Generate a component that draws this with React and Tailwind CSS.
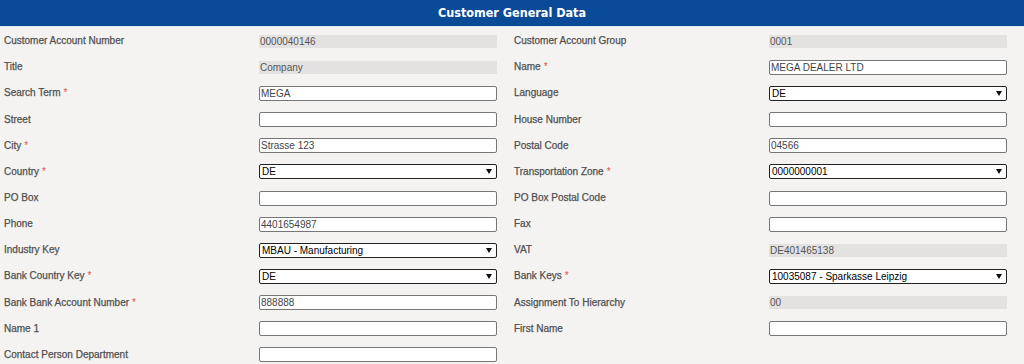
import React from "react";

const Arrow = () => (
  <svg width="6" height="5" viewBox="0 0 6 5" className="absolute right-[4px] top-[4px]">
    <path d="M0 0 H6 L3 5 Z" fill="#111" />
  </svg>
);

function Field({ f }) {
  if (!f) return <div />;
  const { label, req, type, value } = f;
  return (
    <div className="flex items-center pl-[4px]">
      <div className="w-[255px] shrink-0 text-[10px] text-[#505050] leading-none [-webkit-text-stroke:0.25px_#505050]">
        {label}
        {req && <span className="text-[#d9534f] ml-[3px] [-webkit-text-stroke:0px]">*</span>}
      </div>
      {type === "ro" && (
        <div className="w-[238px] h-[13px] bg-[#e3e2e1] text-[10px] text-[#555] leading-[13px] pl-[1px]">
          {value}
        </div>
      )}
      {type === "in" && (
        <div className="w-[238px] h-[15px] bg-white border border-[#767676] rounded-[2px] text-[10px] text-[#444] leading-[13px] pl-[1px]">
          {value}
        </div>
      )}
      {type === "sel" && (
        <div className="relative w-[238px] h-[15px] bg-white border border-[#222] rounded-[2px] text-[10px] text-black leading-[13px] pl-[2px]">
          {value}
          <Arrow />
        </div>
      )}
    </div>
  );
}

const rows = [
  [
    { label: "Customer Account Number", type: "ro", value: "0000040146" },
    { label: "Customer Account Group", type: "ro", value: "0001" },
  ],
  [
    { label: "Title", type: "ro", value: "Company" },
    { label: "Name", req: true, type: "in", value: "MEGA DEALER LTD" },
  ],
  [
    { label: "Search Term", req: true, type: "in", value: "MEGA" },
    { label: "Language", type: "sel", value: "DE" },
  ],
  [
    { label: "Street", type: "in", value: "" },
    { label: "House Number", type: "in", value: "" },
  ],
  [
    { label: "City", req: true, type: "in", value: "Strasse 123" },
    { label: "Postal Code", type: "in", value: "04566" },
  ],
  [
    { label: "Country", req: true, type: "sel", value: "DE" },
    { label: "Transportation Zone", req: true, type: "sel", value: "0000000001" },
  ],
  [
    { label: "PO Box", type: "in", value: "" },
    { label: "PO Box Postal Code", type: "in", value: "" },
  ],
  [
    { label: "Phone", type: "in", value: "4401654987" },
    { label: "Fax", type: "in", value: "" },
  ],
  [
    { label: "Industry Key", type: "sel", value: "MBAU - Manufacturing" },
    { label: "VAT", type: "ro", value: "DE401465138" },
  ],
  [
    { label: "Bank Country Key", req: true, type: "sel", value: "DE" },
    { label: "Bank Keys", req: true, type: "sel", value: "10035087 - Sparkasse Leipzig" },
  ],
  [
    { label: "Bank Bank Account Number", req: true, type: "in", value: "888888" },
    { label: "Assignment To Hierarchy", type: "ro", value: "00" },
  ],
  [
    { label: "Name 1", type: "in", value: "" },
    { label: "First Name", type: "in", value: "" },
  ],
  [{ label: "Contact Person Department", type: "in", value: "" }, null],
];

export default function App() {
  return (
    <div className="w-[1024px] h-[364px] overflow-hidden bg-[#f4f3f2] font-['Liberation_Sans',Arial,sans-serif]">
      <div className="h-[27px] bg-[#0b4a96] border-b border-[#dfeef5] flex items-center justify-center">
        <span className="text-white font-bold text-[12.5px] font-['DejaVu_Sans_Condensed','DejaVu_Sans',sans-serif]">
          Customer General Data
        </span>
      </div>
      <div className="grid grid-cols-[510px_510px] auto-rows-[26.17px] pt-[1px]">
        {rows.map((r, i) => (
          <React.Fragment key={i}>
            <Field f={r[0]} />
            <Field f={r[1]} />
          </React.Fragment>
        ))}
      </div>
    </div>
  );
}
